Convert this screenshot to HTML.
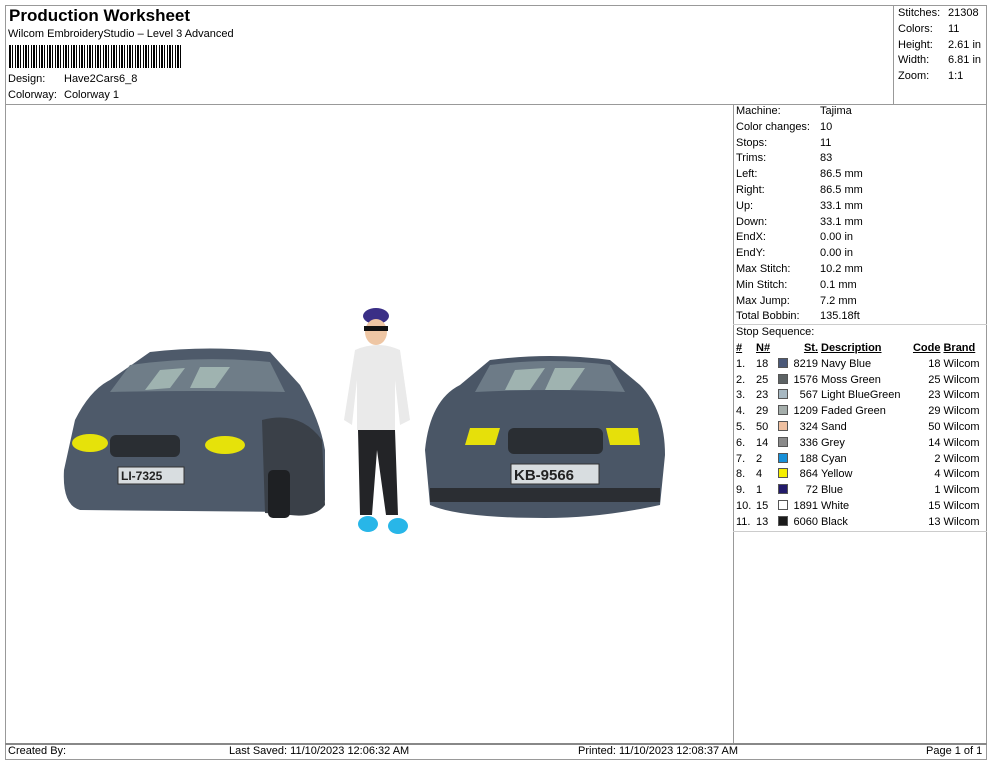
<!DOCTYPE html>
<html><head><meta charset="utf-8"><style>
*{margin:0;padding:0;box-sizing:border-box}
body{width:990px;height:762px;background:#fff;font-family:"Liberation Sans",Arial,sans-serif;color:#000;position:relative;overflow:hidden;font-size:11px}
.a{position:absolute;white-space:nowrap}
.ln{position:absolute;background:#999}
table{border-collapse:collapse;font-size:11px}
td{padding:0;height:15.8px;line-height:15.8px;white-space:nowrap}
.sw{display:inline-block;width:10px;height:10px;vertical-align:-1px;border:1px solid #555}
</style></head><body>
<div class="ln" style="left:5px;top:5px;width:982px;height:1px"></div>
<div class="ln" style="left:5px;top:5px;width:1px;height:755px"></div>
<div class="ln" style="left:986px;top:5px;width:1px;height:755px"></div>
<div class="ln" style="left:5px;top:759px;width:982px;height:1px"></div>
<div class="ln" style="left:5px;top:104px;width:982px;height:1px"></div>
<div class="ln" style="left:893px;top:5px;width:1px;height:99px"></div>
<div class="ln" style="left:733px;top:104px;width:1px;height:640px"></div>
<div class="ln" style="left:733px;top:531px;width:254px;height:1px;background:#ccc"></div>
<div class="ln" style="left:5px;top:743px;width:982px;height:2px;background:#888"></div>
<div class="ln" style="left:733px;top:324px;width:254px;height:1px;background:#ccc"></div>

<div class="a" style="left:9px;top:6px;font-size:17px;font-weight:bold">Production Worksheet</div>
<div class="a" style="left:8px;top:28px">Wilcom EmbroideryStudio – Level 3 Advanced</div>
<div class="a" style="left:9px;top:45px;width:174px;height:23px;background:repeating-linear-gradient(90deg,#000 0 2px,#fff 2px 3px,#000 3px 4px,#fff 4px 6px,#000 6px 7px,#fff 7px 8px)"></div>
<div class="a" style="left:8px;top:73px">Design:</div><div class="a" style="left:64px;top:73px">Have2Cars6_8</div>
<div class="a" style="left:8px;top:89px">Colorway:</div><div class="a" style="left:64px;top:89px">Colorway 1</div>

<div class="a" style="left:898px;top:6px;line-height:15.8px">Stitches:<br>Colors:<br>Height:<br>Width:<br>Zoom:</div>
<div class="a" style="left:948px;top:6px;line-height:15.8px">21308<br>11<br>2.61 in<br>6.81 in<br>1:1</div>

<div class="a" style="left:736px;top:104px;line-height:15.8px">Machine:<br>Color changes:<br>Stops:<br>Trims:<br>Left:<br>Right:<br>Up:<br>Down:<br>EndX:<br>EndY:<br>Max Stitch:<br>Min Stitch:<br>Max Jump:<br>Total Bobbin:<br>Stop Sequence:</div>
<div class="a" style="left:820px;top:104px;line-height:15.8px">Tajima<br>10<br>11<br>83<br>86.5 mm<br>86.5 mm<br>33.1 mm<br>33.1 mm<br>0.00 in<br>0.00 in<br>10.2 mm<br>0.1 mm<br>7.2 mm<br>135.18ft</div>

<table class="a" style="left:736px;top:341px;width:248px">
<tr style="font-weight:bold;text-decoration:underline"><td style="width:20px">#</td><td style="width:22px">N#</td><td style="width:14px"></td><td style="width:26px;text-align:right">St.</td><td style="padding-left:3px">Description</td><td style="text-align:right">Code</td><td style="padding-left:3px">Brand</td></tr>
<tr><td>1.</td><td>18</td><td><span class="sw" style="background:#4a5878"></span></td><td align="right">8219</td><td style="padding-left:3px">Navy Blue</td><td align="right">18</td><td style="padding-left:3px">Wilcom</td></tr>
<tr><td>2.</td><td>25</td><td><span class="sw" style="background:#5c6264"></span></td><td align="right">1576</td><td style="padding-left:3px">Moss Green</td><td align="right">25</td><td style="padding-left:3px">Wilcom</td></tr>
<tr><td>3.</td><td>23</td><td><span class="sw" style="background:#a7b8c2"></span></td><td align="right">567</td><td style="padding-left:3px">Light BlueGreen</td><td align="right">23</td><td style="padding-left:3px">Wilcom</td></tr>
<tr><td>4.</td><td>29</td><td><span class="sw" style="background:#a5aeab"></span></td><td align="right">1209</td><td style="padding-left:3px">Faded Green</td><td align="right">29</td><td style="padding-left:3px">Wilcom</td></tr>
<tr><td>5.</td><td>50</td><td><span class="sw" style="background:#efc0a0"></span></td><td align="right">324</td><td style="padding-left:3px">Sand</td><td align="right">50</td><td style="padding-left:3px">Wilcom</td></tr>
<tr><td>6.</td><td>14</td><td><span class="sw" style="background:#8a8a8a"></span></td><td align="right">336</td><td style="padding-left:3px">Grey</td><td align="right">14</td><td style="padding-left:3px">Wilcom</td></tr>
<tr><td>7.</td><td>2</td><td><span class="sw" style="background:#1790d8"></span></td><td align="right">188</td><td style="padding-left:3px">Cyan</td><td align="right">2</td><td style="padding-left:3px">Wilcom</td></tr>
<tr><td>8.</td><td>4</td><td><span class="sw" style="background:#f5ee00"></span></td><td align="right">864</td><td style="padding-left:3px">Yellow</td><td align="right">4</td><td style="padding-left:3px">Wilcom</td></tr>
<tr><td>9.</td><td>1</td><td><span class="sw" style="background:#221a6a"></span></td><td align="right">72</td><td style="padding-left:3px">Blue</td><td align="right">1</td><td style="padding-left:3px">Wilcom</td></tr>
<tr><td>10.</td><td>15</td><td><span class="sw" style="background:#fff"></span></td><td align="right">1891</td><td style="padding-left:3px">White</td><td align="right">15</td><td style="padding-left:3px">Wilcom</td></tr>
<tr><td>11.</td><td>13</td><td><span class="sw" style="background:#1a1a1a"></span></td><td align="right">6060</td><td style="padding-left:3px">Black</td><td align="right">13</td><td style="padding-left:3px">Wilcom</td></tr>
</table>

<svg class="a" style="left:0;top:0" width="733" height="743">
<!-- left car -->
<path d="M75 420 Q90 390 110 380 L150 352 Q210 345 270 352 L300 385 Q320 420 325 450 L325 500 Q320 515 290 512 L80 510 Q62 505 64 470 Z" fill="#4e5a6a"/>
<path d="M130 365 Q200 355 270 362 L285 392 Q200 390 110 392 Z" fill="#6f7d88"/>
<path d="M160 370 L185 368 L170 388 L145 390 Z M200 367 L230 367 L215 388 L190 388Z" fill="#9fb3b0"/>
<path d="M262 420 Q300 410 322 440 L325 505 Q315 518 290 515 L265 513 Z" fill="#3a4048"/>
<rect x="268" y="470" width="22" height="48" rx="5" fill="#1e2023"/>
<rect x="110" y="435" width="70" height="22" rx="6" fill="#2a2e33"/>
<ellipse cx="90" cy="443" rx="18" ry="9" fill="#e6e20a"/><ellipse cx="225" cy="445" rx="20" ry="9" fill="#e6e20a"/>
<rect x="118" y="467" width="66" height="17" fill="#d8dde0" stroke="#333"/>
<text x="121" y="480" font-size="12" font-weight="bold" fill="#222">LI-7325</text>
<!-- person -->
<ellipse cx="376" cy="316" rx="13" ry="8" fill="#3a2f86"/>
<ellipse cx="376" cy="332" rx="11" ry="13" fill="#eec6a4"/>
<rect x="364" y="326" width="24" height="5" fill="#111"/>
<path d="M355 350 Q378 340 400 350 L410 420 L400 425 L395 380 L395 430 L357 430 L357 380 L352 425 L344 420 Z" fill="#eaeaea"/>
<path d="M358 430 L395 430 L398 515 L386 515 L377 450 L372 515 L360 515 Z" fill="#232427"/>
<ellipse cx="368" cy="524" rx="10" ry="8" fill="#28b6e8"/><ellipse cx="398" cy="526" rx="10" ry="8" fill="#28b6e8"/>
<!-- right car -->
<path d="M425 450 Q430 400 460 385 L490 360 Q550 352 610 360 L640 385 Q665 410 665 455 L660 505 Q600 518 545 518 Q460 518 430 505 Z" fill="#4a5666"/>
<path d="M490 365 Q550 357 610 365 L625 392 Q550 388 475 392 Z" fill="#6d7b87"/>
<path d="M515 370 L545 368 L530 390 L505 390Z M555 368 L585 368 L570 390 L545 390Z" fill="#9fb3b0"/>
<path d="M470 428 L500 428 L495 445 L465 445Z" fill="#e6e00a"/><path d="M606 428 L638 428 L640 445 L610 445Z" fill="#e6e00a"/>
<rect x="508" y="428" width="95" height="26" rx="6" fill="#2a2e33"/>
<rect x="511" y="464" width="88" height="20" fill="#d8dde0" stroke="#333"/>
<text x="514" y="480" font-size="15" font-weight="bold" fill="#222">KB-9566</text>
<rect x="430" y="488" width="230" height="14" fill="#2b2e33"/>
</svg>

<div class="a" style="left:8px;top:745px">Created By:</div>
<div class="a" style="left:229px;top:745px">Last Saved: 11/10/2023 12:06:32 AM</div>
<div class="a" style="left:578px;top:745px">Printed: 11/10/2023 12:08:37 AM</div>
<div class="a" style="left:926px;top:745px">Page 1 of 1</div>
</body></html>
